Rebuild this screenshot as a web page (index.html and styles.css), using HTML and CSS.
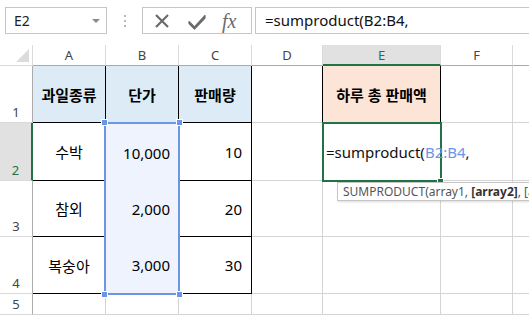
FILE: index.html
```html
<!DOCTYPE html>
<html lang="ko">
<head>
  <meta charset="UTF-8">
  <title>Excel - SUMPRODUCT</title>
  <link rel="stylesheet" href="styles.css">
</head>
<body>
  <div class="formula-bar">
    <div class="name-box">
      <span>E2</span>
      <span class="name-arrow"></span>
    </div>
    <div class="grip"><i></i><i></i><i></i></div>
    <div class="fx-buttons">
      <svg class="icon" width="18" height="18" viewBox="0 0 18 18">
        <path d="M3 3 L15 15 M15 3 L3 15" stroke="#6b6b6b" stroke-width="2.2" fill="none"/>
      </svg>
      <svg class="icon" width="20" height="18" viewBox="0 0 20 18">
        <path d="M2 9.5 L7.5 15 L18 3.5 L18 6 L7.5 17 L2 11.5 Z" fill="#6b6b6b" stroke="#6b6b6b" stroke-width="1.2" stroke-linejoin="round"/>
      </svg>
      <span class="fx">fx</span>
    </div>
    <div class="formula-input">=sumproduct(B2:B4,</div>
  </div>

  <div class="sheet">
    <div class="grid">
      <div class="corner"><span class="corner-tri"></span></div>
      <div class="col-head">A</div>
      <div class="col-head">B</div>
      <div class="col-head">C</div>
      <div class="col-head">D</div>
      <div class="col-head active">E</div>
      <div class="col-head">F</div>
      <div class="col-head last"></div>

      <div class="row-head">1</div>
      <div class="cell head">과일종류</div>
      <div class="cell head">단가</div>
      <div class="cell head">판매량</div>
      <div class="cell"></div>
      <div class="cell total">하루 총 판매액</div>
      <div class="cell"></div>
      <div class="cell last"></div>

      <div class="row-head active">2</div>
      <div class="cell data">수박</div>
      <div class="cell data num"></div>
      <div class="cell data num">10</div>
      <div class="cell"></div>
      <div class="cell"></div>
      <div class="cell"></div>
      <div class="cell last"></div>

      <div class="row-head">3</div>
      <div class="cell data">참외</div>
      <div class="cell data num"></div>
      <div class="cell data num">20</div>
      <div class="cell"></div>
      <div class="cell"></div>
      <div class="cell"></div>
      <div class="cell last"></div>

      <div class="row-head">4</div>
      <div class="cell data">복숭아</div>
      <div class="cell data num"></div>
      <div class="cell data num">30</div>
      <div class="cell"></div>
      <div class="cell"></div>
      <div class="cell"></div>
      <div class="cell last"></div>

      <div class="row-head">5</div>
      <div class="cell"></div>
      <div class="cell"></div>
      <div class="cell"></div>
      <div class="cell"></div>
      <div class="cell"></div>
      <div class="cell"></div>
      <div class="cell last"></div>
    </div>

    <!-- range B2:B4 referenced by the formula -->
    <div class="range">
      <div class="range-val">10,000</div>
      <div class="range-val">2,000</div>
      <div class="range-val">3,000</div>
      <span class="handle h-tl"></span>
      <span class="handle h-tr"></span>
      <span class="handle h-bl"></span>
      <span class="handle h-br"></span>
    </div>

    <!-- active cell E2 in edit mode -->
    <div class="active-cell">
      <span>=sumproduct(<span class="ref">B2:B4</span>,</span><span class="caret"></span>
      <span class="fill-handle"></span>
    </div>

    <div class="tooltip">SUMPRODUCT(array1, <b>[array2]</b>, [a</div>
  </div>
</body>
</html>
```

FILE: styles.css
```css
body {
  margin: 0;
  width: 529px;
  height: 315px;
  overflow: hidden;
  background-color: #ffffff;
  font-family: "Noto Sans", "Noto Sans CJK KR", sans-serif;
  color: #000000;
}
.formula-bar {
  display: flex;
  align-items: center;
  height: 27px;
  padding: 7px 0 11px 5px;
}
.name-box {
  box-sizing: border-box;
  width: 102px;
  height: 27px;
  border: 1px solid #c6c6c6;
  display: flex;
  align-items: center;
  justify-content: space-between;
  padding: 0 6px 0 8px;
  font-size: 14px;
  color: #222222;
}
.name-arrow {
  width: 0;
  height: 0;
  border-left: 4px solid transparent;
  border-right: 4px solid transparent;
  border-top: 4px solid #8a8a8a;
}
.grip {
  width: 35px;
  display: flex;
  flex-direction: column;
  align-items: center;
  gap: 3px;
}
.grip i {
  width: 2px;
  height: 2px;
  background-color: #b8b8b8;
}
.fx-buttons {
  box-sizing: border-box;
  width: 110px;
  height: 27px;
  border: 1px solid #c6c6c6;
  display: flex;
  align-items: center;
  gap: 16px;
  padding-left: 10px;
}
.fx {
  font-family: "Liberation Serif", serif;
  font-style: italic;
  font-size: 20px;
  color: #6b6b6b;
  line-height: 1;
  margin-left: -1px;
}
.formula-input {
  flex: 1;
  box-sizing: border-box;
  height: 27px;
  margin-left: 3px;
  border: 1px solid #c6c6c6;
  border-right: none;
  padding-left: 9px;
  font-size: 15px;
  line-height: 24px;
  color: #111111;
}
.sheet {
  position: relative;
}
.grid {
  display: grid;
  grid-template-columns: 33px 73px 73px 73px 71px 118px 72px 16px;
  grid-template-rows: 21px 57px 58px 56px 57px 21px;
}
.grid > div {
  box-sizing: border-box;
}
.corner {
  position: relative;
  border-right: 1px solid #dadada;
  border-bottom: 1px solid #dadada;
}
.corner-tri {
  position: absolute;
  right: 3px;
  bottom: 3px;
  width: 0;
  height: 0;
  border-left: 13px solid transparent;
  border-bottom: 13px solid #dcdcdc;
}
.col-head {
  display: flex;
  align-items: center;
  justify-content: center;
  font-size: 13px;
  color: #444444;
  border-right: 1px solid #dadada;
  border-bottom: 1px solid #ababab;
}
.col-head.active {
  background-color: #e1e1e1;
  color: #217346;
  border-bottom: 2px solid #217346;
}
.row-head {
  display: flex;
  align-items: flex-end;
  justify-content: center;
  padding-bottom: 1px;
  font-size: 13px;
  color: #444444;
  border-right: 1px solid #ababab;
  border-bottom: 1px solid #dadada;
}
.row-head.active {
  background-color: #e1e1e1;
  color: #217346;
  border-right: 2px solid #217346;
}
.cell {
  display: flex;
  align-items: center;
  justify-content: center;
  font-size: 15px;
  border-right: 1px solid #d4d4d4;
  border-bottom: 1px solid #d4d4d4;
}
.cell.last, .col-head.last {
  border-right: none;
}
.cell.head {
  background-color: #ddebf7;
  font-weight: bold;
  border-right: 1px solid #000000;
  border-bottom: 1px solid #000000;
}
.cell.data {
  border-right: 1px solid #000000;
  border-bottom: 1px solid #000000;
}
.cell.num {
  justify-content: flex-end;
  padding-right: 9px;
}
.cell.total {
  background-color: #fce4d6;
  font-weight: bold;
  border-left: 1px solid #000000;
  border-right: 1px solid #000000;
  border-bottom: 1px solid #000000;
  margin-left: -1px;
}
.range {
  position: absolute;
  left: 104px;
  top: 77px;
  box-sizing: border-box;
  width: 76px;
  height: 173px;
  border: 2px solid #6b96e8;
  background-color: #eef3fd;
  display: grid;
  grid-template-rows: 57px 56px 56px;
}
.range-val {
  display: flex;
  align-items: center;
  justify-content: flex-end;
  padding-right: 8px;
  font-size: 15px;
}
.handle {
  position: absolute;
  width: 5px;
  height: 5px;
  background-color: #6b96e8;
  border: 1px solid #ffffff;
}
.h-tl { left: -5px; top: -5px; }
.h-tr { right: -5px; top: -5px; }
.h-bl { left: -5px; bottom: -5px; }
.h-br { right: -5px; bottom: -5px; }
.active-cell {
  position: absolute;
  left: 322px;
  top: 77px;
  box-sizing: border-box;
  width: 120px;
  height: 60px;
  border: 2px solid #217346;
  background-color: #ffffff;
  display: flex;
  align-items: center;
  padding-left: 2px;
  font-size: 15px;
  color: #111111;
}
.ref {
  color: #6b96e8;
}
.caret {
  display: inline-block;
  width: 1px;
  height: 19px;
  margin-left: 1px;
  background-color: #000000;
}
.fill-handle {
  position: absolute;
  right: -4px;
  bottom: -4px;
  width: 5px;
  height: 4px;
  background-color: #217346;
  border: 1px solid #ffffff;
}
.tooltip {
  position: absolute;
  left: 337px;
  top: 137px;
  width: 192px;
  box-sizing: border-box;
  height: 19px;
  padding: 0 0 0 5px;
  white-space: nowrap;
  overflow: hidden;
  background-color: #ffffff;
  border: 1px solid #c6c6c6;
  border-right: none;
  box-shadow: 1px 1px 2px rgba(0, 0, 0, 0.15);
  font-size: 12px;
  line-height: 17px;
  color: #555555;
}
.tooltip b {
  color: #333333;
}
```
